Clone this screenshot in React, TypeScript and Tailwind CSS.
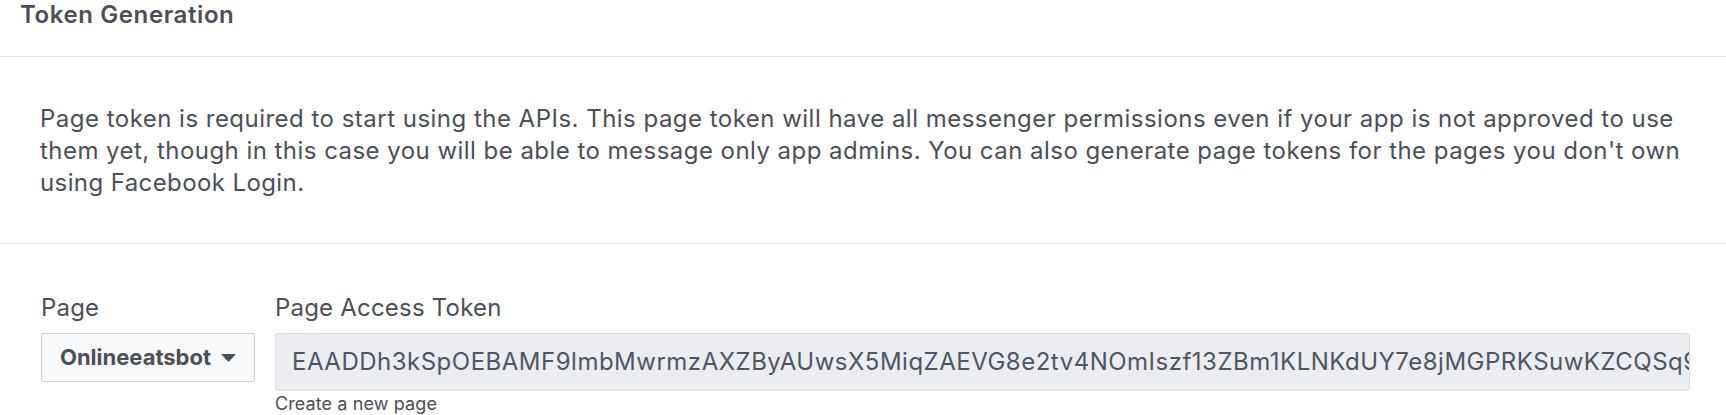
import React from "react";

export default function App() {
  const lines: [string, string][] = [
    [
      "Page token is required to start using the APIs. This page token will have all messenger permissions even if your app is not approved to use",
      "tracking-[0.48px]",
    ],
    [
      "them yet, though in this case you will be able to message only app admins. You can also generate page tokens for the pages you don't own",
      "tracking-[0.46px]",
    ],
    ["using Facebook Login.", "tracking-[0.4px]"],
  ];
  return (
    <div
      className="w-[1726px] h-[415px] bg-white text-[#4b4f56] overflow-hidden"
      style={{ fontFamily: "Inter, 'Noto Sans', sans-serif" }}
    >
      <div className="h-[57px] border-b border-[#e5e6e9] px-[20px]">
        <h1 className="text-[24px] leading-[29px] font-semibold tracking-[0.6px]">Token Generation</h1>
      </div>
      <div className="h-[187px] border-b border-[#e5e6e9] pl-[40px] pr-[40px] pt-[46px]">
        <p className="text-[24px] leading-[32px]">
          {lines.map(([l, t], i) => (
            <span key={i} className={`block whitespace-nowrap ${t}`}>
              {l}
            </span>
          ))}
        </p>
      </div>
      <div className="flex gap-[20px] pl-[41px] pt-[50px]">
        <div className="flex flex-col w-[214px]">
          <label className="text-[24px] leading-[28px] tracking-[0.2px]">Page</label>
          <button className="mt-[11px] h-[49px] w-[214px] flex items-center justify-center gap-[10px] border border-[#ccd0d5] rounded-[2px] bg-[#f9fafb]">
            <span className="text-[22px] font-bold text-[#4b4f56]">Onlineeatsbot</span>
            <svg width="15" height="8" viewBox="0 0 15 8">
              <path d="M0 0 L15 0 L7.5 8 Z" fill="#4b4f56" />
            </svg>
          </button>
        </div>
        <div className="flex flex-col w-[1415px]">
          <label className="text-[24px] leading-[28px] tracking-[0.2px]">Page Access Token</label>
          <div className="mt-[11px] h-[58px] w-[1415px] flex items-center overflow-hidden border border-[#dadde1] rounded-[3px] bg-[#ebedf0] pl-[16px]">
            <span className="text-[24px] tracking-[0.5px] whitespace-nowrap text-[#4f5663]">
              EAADDh3kSpOEBAMF9lmbMwrmzAXZByAUwsX5MiqZAEVG8e2tv4NOmIszf13ZBm1KLNKdUY7e8jMGPRKSuwKZCQSq9
            </span>
          </div>
          <span className="text-[18px] leading-[20px] mt-[3px] tracking-[0.1px] text-[#4b4f56]">Create a new page</span>
        </div>
      </div>
    </div>
  );
}
